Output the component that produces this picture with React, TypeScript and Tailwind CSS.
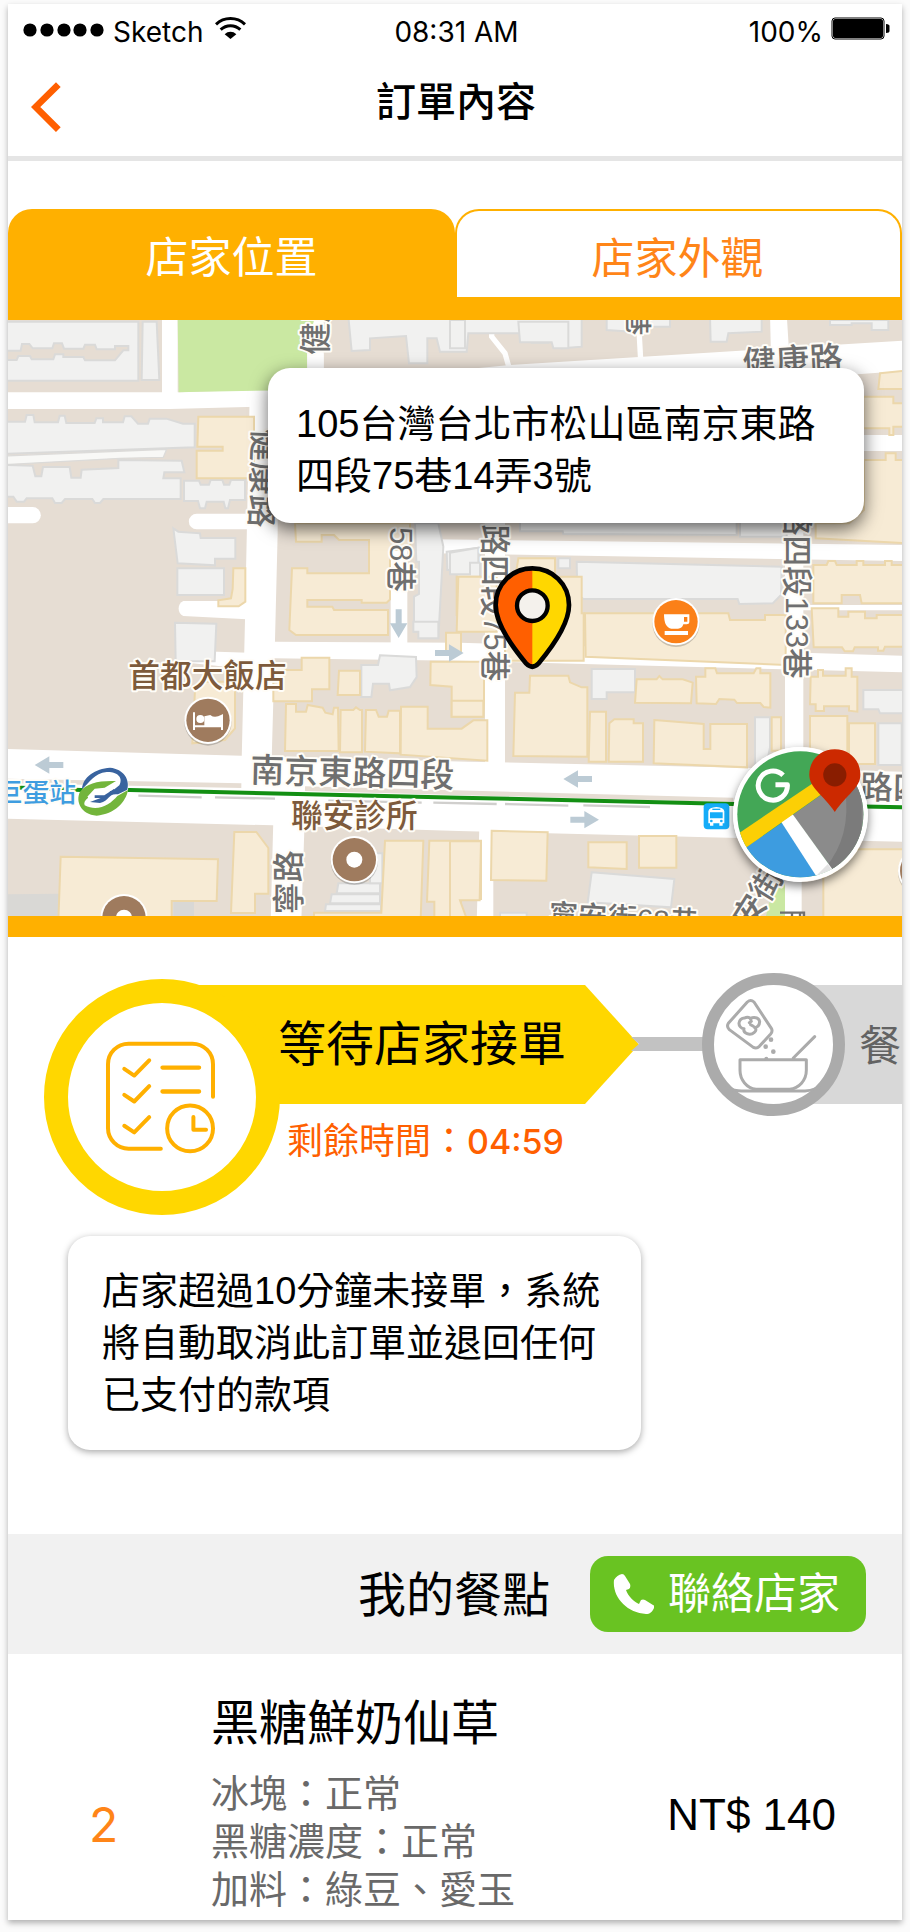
import React from "react";

const CJK = "font-['Liberation_Sans','Noto_Sans_CJK_TC',sans-serif]";

function StatusBar() {
  return (
    <div className="grid grid-cols-[1fr_auto_1fr] items-center pl-[15px] pr-3 pt-2 font-['Inter',sans-serif] text-[28px] leading-10">
      <div className="flex items-center gap-2">
        <svg className="mb-1 h-[14px] w-[82px]" viewBox="0 0 82 14" aria-hidden="true">
          <circle cx="7" cy="7" r="6.600" />
          <circle cx="24" cy="7" r="6.600" />
          <circle cx="41" cy="7" r="6.600" />
          <circle cx="57" cy="7" r="6.600" />
          <circle cx="74" cy="7" r="6.600" />
        </svg>
        <span>Sketch</span>
        <svg className="mb-2 ml-1 h-[22px] w-[31px]" viewBox="0 0 93 66" fill="none" stroke="#000" strokeWidth="9" aria-hidden="true">
          <path d="M3 22C27-1 66-1 90 22" />
          <path d="M17 38c17-16 42-16 59 0" />
          <path d="M29 52c10-10 25-10 35 0L46.500 66z" fill="#000" stroke="none" />
        </svg>
      </div>
      <span className="text-center">08:31 AM</span>
      <div className="flex items-center justify-end gap-2">
        <span>100%</span>
        <svg className="mb-2 h-[23px] w-[59px]" viewBox="0 0 59 23" aria-hidden="true">
          <rect x="1" y="1" width="52" height="21" rx="3" fill="none" stroke="#000" strokeWidth="1" />
          <rect x="2" y="2" width="50" height="19" rx="2" />
          <path d="M55 7c2.500 0 3.500 1 3.500 2v5c0 1-1 2-3.500 2z" />
        </svg>
      </div>
    </div>
  );
}

type Shape = [number, number, string];

const greyBlocks: Shape[] = [
  [0, 930, "M10 35H415V212H10V150H50l5-12H90l5 10h65l5-15h25v8h60l5 10H345l25-30h15V108H345v10H290l-5-14H255l-5 12H192l-6-16H162l-5 15H98L88 102H66l-4 20H10z"],
  [0, 930, "M428 35h42l8 175H425z"],
  [0, 930, "M10 335H75l5-20h20l4 22h70l5-20h15l5 22h85l5-14h20v12h60l5-18h20l20 22h30l5-15h50l50 15h35V412L10 432z"],
  [0, 930, "M10 465l88 2 8 32h18l5-28h80l5 32h28l3-24 110-5V450l190 2 8 35h-60l-3 18h52v62H310l-10 12H285l-8-12H195l-10 12H165l-8-14H80L72 575H50l-10-15H10z"],
  [0, 930, "M552 512h45l5 12h25l5-14h35l5 14h16l5-14h42v60H690l-6 25h-8l-5-20H620l-5 20H600l-6-22H552z"],
  [0, 930, "M520 655l15 10 65 5 2 14H706v62H645v20l-112-6z"],
  [0, 930, "M532 775H672v80H532z"],
  [0, 930, "M525 938l124 3-5 113H527z"],
  [0, 930, "M1045 20h700v90l-60 5V70l-40 3v25h-50V70H1405l-5 55H1320l-10-40h-28v75h-55L1218 78 1110 85v35l-55 3z"],
  [0, 930, "M1245 640h70l15 70-15 275H1258V965h-16V860l15-8V755h-8z"],
  [0, 930, "M1340 725l100-12v95h-70V780h-28z"],
  [1350, 930, "M205 35H355v80H310l-5-18H210z"],
  [1350, 930, "M470 20H660v30H545v15l-75-5z"],
  [1350, 930, "M780 20H935v45l-100 5-5 25H782z"],
  [1350, 930, "M1140 30h175v30h-50V40h-60V45h-65z"],
  [1350, 930, "M0 30h45v85H0z"],
  [1350, 930, "M380 755l615 15-2 85-25 25-100 2-5-15H400l-18-15z"],
  [1350, 930, "M325 745h35v30h-35z"],
  [1350, 930, "M0 728l85-15v45H60v35H0z"],
  [1350, 930, "M210 630H860v45L340 672l-2-8H210z"],
  [1350, 930, "M870 630h140v50H870z"],
  [0, 1890, "M1140 76l108 5 2 60-20 30-60 10-3-20h-48l-5 40h-30V105h50z"],
  [0, 1890, "M1240-25h75v50h-60V5h-15z"],
  [0, 1890, "M1015 760h125v30H1010zM995 793h145v27H990zM978 823h165v20H975z"],
  [0, 1890, "M1110 670h37v90h-37z"],
  [1350, 1890, "M425 117H555v70H470v20H425z"],
  [1350, 1890, "M425 727l248 20-10 85-250-15z"],
  [1350, 1890, "M915 262h45v90l-10 50H915z"],
  [1350, 1890, "M1240 180h130v70h-80l-5-12h-45zM1285 280h70v125h-70z"],
  [1350, 1890, "M150 848h80v20h-80z"],
];

const tanBlocks: Shape[] = [
  [0, 930, "M595 320H762V505H590V422H668V410H592z"],
  [0, 930, "M700 775h36v100l-20 14H655v-18l38-6 5-28z"],
  [0, 930, "M885 640h345v80h-60v148l-10 10h-75v-8H922v20h75l5 10h162v75H888l-20-15 8-185h46v15H1107V690h-90l-15-15H965v20H888z"],
  [0, 930, "M1370 800h70v115h-70z"],
  [0, 930, "M1338 968h45v60h-45z"],
  [1350, 930, "M205 745H315v55h80v110h6v142H165V1000z"],
  [1350, 930, "M25 800H140V965H20z"],
  [1350, 930, "M405 910l430 0 5 20h105v-15h62v150l-600-25z"],
  [1350, 930, "M1290 190l75-8v55h-80z"],
  [1350, 930, "M1240 260h90v20h40V350h-40v25h-12V355h-78z"],
  [1350, 930, "M1242 450h65V430h30v20h40V700l-280-15V640h100l45-40z"],
  [1350, 930, "M1090 765h40l5-12h20l5 12h60v-12h20v12h65v-12h20v12h50V880l-140 0-5-25h-55v25h-85z"],
  [1350, 930, "M1085 895h80v25h30v-15h50v20h35v-10h90v95h-65l-5 12h-16v-10h-70l-5 12h-25l-8-12-85 0z"],
  [0, 1890, "M585 180l15-25h105v140l-30 35-98 10z"],
  [0, 1890, "M905 83h83v95h-52v36H820V120h85z"],
  [0, 1890, "M1017 122h63v73h-67z"],
  [0, 1890, "M858 222h30v23h30l5-20 45 8 8 15 22 5 4-20h12l2 130H855z"],
  [0, 1890, "M1022 240h38l8-8 12 8h6V367h-66z"],
  [0, 1890, "M1098 240h30l8 20h25l5-18h34V370l-105-5z"],
  [0, 1890, "M1203 230h80v66h102l35-25h42V392l-260-18z"],
  [0, 1890, "M1292 95h160V210l-2 50h-95v-90l-64-5z"],
  [0, 1890, "M1355 212h95v48h-95z"],
  [0, 1890, "M182 680l472 8-4 125H515v60H175z"],
  [0, 1890, "M703 606h66l36 48v137h-40v58h-72z"],
  [0, 1890, "M1155 632h115l-8 236H942v-20h202z"],
  [0, 1890, "M1288 632h155v175h-60v61h-80v-53h-22z"],
  [1350, 1890, "M240 137h115l5 20 35 15h17V380L190 378l5-190h43z"],
  [1350, 1890, "M420 245h48v150h-52z"],
  [1350, 1890, "M478 280l15-12h58v12h28v115h-103z"],
  [1350, 1890, "M560 148h60l8-10 10 10h60l30 10-5 62-168-2z"],
  [1350, 1890, "M738 140h28v-25h30l5 15h110l8-15h12v15h30v103l-20-2-10-12h-70l-8-10-45-2-10 15-58-2z"],
  [1350, 1890, "M613 270l148 12v75h20v-75h110v130l-280-12z"],
  [1350, 1890, "M965 262h28v100h-28z"],
  [1350, 1890, "M1082 140h22v-20h15v17h68v-22h18v25h17v105l-25-3v-13h-75v14h-25v-20h-17z"],
  [1350, 1890, "M1080 258h112v145h-112zM1197 280h78v122h-78z"],
  [1350, 1890, "M125 602l168 5-4 145-166-2z"],
  [1350, 1890, "M415 637h115v80l-115-5zM567 618h112v95H567z"],
  [1350, 1890, "M1120 658h250v210h-250z"],
  [1350, 1890, "M0 634h93l-4 177H30l20 55H0z"],
];

const roads = [
  "M486 940h47v250h-47z",
  "M24 1177H535l215-7 780-75 1176-73v91l-1176 87-1020 27H24z",
  "M750 1140h83v460l-8 320-10 360h-90l10-420z",
  "M922 940h49v260h-49z",
  "M1172 1200h50v740h-50z",
  "M822 1925l558 3 1326 39v50l-1326-35-558-7z",
  "M1300 1618l1406 17v48L1300 1660z",
  "M1455 1560h60v750h-60z",
  "M2355 1500h55v870h-55z",
  "M2310 940h50l8 130h-55z",
  "M2590 1305h120v48h-120z",
  "M24 2247l700 20 680 18 560 12 742 18v210l-520-12-810-20-558-17-794-20z",
  "M820 2460h94l-10 300h-92z",
  "M1438 2480h42v290h-50z",
  "M2355 2600h50v160h-50z",
  "M24 1521H98a24 24 0 0 1 0 49H24z",
  "M750 1541H590a23 23 0 0 0 0 47H750z",
  "M745 1803H550a25 25 0 0 0 0 45l190 10z",
  "M745 1958l-185-6a20 20 0 0 0-10 35l190 20z",
  "M2400 1815h310v16h-310z",
];

function Halo({ children, x, y, size, rotate = 0, fill = "#6f6f6f", anchor = "start" }: {
  children: React.ReactNode; x: number; y: number; size: number; rotate?: number; fill?: string; anchor?: "start" | "middle" | "end";
}) {
  return (
    <text
      transform={`translate(${x} ${y}) rotate(${rotate})`}
      fontSize={size}
      fontWeight={500}
      fill={fill}
      textAnchor={anchor}
      stroke="#fffdf8"
      strokeWidth="12"
      strokeLinejoin="round"
      paintOrder="stroke"
    >
      {children}
    </text>
  );
}

function Poi({ x, y, color, children }: { x: number; y: number; color: string; children: React.ReactNode }) {
  return (
    <g transform={`translate(${x} ${y})`}>
      <circle cy="5" r="71" fill="#00000030" />
      <circle r="71" fill="#fff" />
      <circle r="65" fill={color} />
      {children}
    </g>
  );
}

const ARROW = "M0 0L44-26V-9H86V9H44V26z";

function StreetMap() {
  return (
    <svg
      className="block h-auto w-full font-['Liberation_Sans','Noto_Sans_CJK_TC',sans-serif]"
      viewBox="24 960 2682 1788"
      role="img"
      aria-label="店家位置"
    >
      <rect x="0" y="900" width="2800" height="1900" fill="#e6ddd3" />
      <path d="M24 2683l160-2v67H24zM520 2690h62v60h-62z" fill="#d9d8d5" />
      <g fill="#fff">
        {roads.map((d) => <path key={d} d={d} />)}
      </g>
      <path d="M533 950H945l-24 90v130l-320 5-65 2z" fill="#cae8a2" />
      <path d="M922 1060h49v120h-49z" fill="#fff" />
      <path d="M10 1368L500 1348l-10 24-130 3-330 18H10z" fill="#f8f8f6" stroke="#dcdbd9" strokeWidth="4" />
      <path d="M1475 950v60l40 50 20 70M1917 990l5 90" fill="none" stroke="#fff" strokeWidth="16" />
      <g fill="#f1f1f0" stroke="#dadad9" strokeWidth="6">
        {greyBlocks.map(([x, y, d]) => <path key={d} d={d} transform={`translate(${x} ${y})`} />)}
      </g>
      <g fill="#f7ebd5" stroke="#ecd7ab" strokeWidth="6">
        {tanBlocks.map(([x, y, d]) => <path key={d} d={d} transform={`translate(${x} ${y})`} />)}
      </g>
      <path d="M2295 2760l20-80 40-60v140z" fill="#cae8a2" />

      <path d="M24 2343l700 14M915 2366l1285 34" stroke="#e6ddd3" strokeWidth="14" />
      <path d="M415 2387l190 5M645 2392l180 4M985 2402l280 6M1300 2408l190 4M1515 2412l190 5M1750 2416l200 5" stroke="#d0cfcd" strokeWidth="7" />
      <path d="M24 2362l220 8h145l991 23 820 19 506 10" fill="none" stroke="#138f13" strokeWidth="12" />

      <g fill="#bccbd5">
        <path d={ARROW} transform="translate(104 2295)" />
        <path d={ARROW} transform="translate(1690 2337)" />
        <path d={ARROW} transform="translate(1797 2459) rotate(180)" />
        <path d={ARROW} transform="translate(1391 1959) rotate(180)" />
        <path d={ARROW} transform="translate(1196 1914) rotate(-90)" />
      </g>

      <Halo x={980} y={1064} size={96} rotate={-90}>健康</Halo>
      <Halo x={760} y={1285} size={99} rotate={92}>健康路</Halo>
      <Halo x={1171} y={1776} size={92} rotate={90} anchor="end">58巷</Halo>
      <Halo x={1452} y={2044} size={92} rotate={90} anchor="end">路四段75巷</Halo>
      <Halo x={2358} y={2036} size={92} rotate={90} anchor="end">路四段133巷</Halo>
      <Halo x={1884} y={1006} size={82} rotate={90} anchor="end">巷</Halo>
      <Halo x={2230} y={1126} size={100} rotate={-3}>健康路</Halo>
      <Halo x={750} y={2346} size={102} rotate={1.5}>南京東路四段</Halo>
      <Halo x={2580} y={2396} size={98} rotate={1}>路四</Halo>
      <Halo x={900} y={2743} size={96} rotate={-90}>寧路</Halo>
      <Halo x={1645} y={2775} size={88} rotate={3}>寧安街68巷</Halo>
      <Halo x={2252} y={2792} size={96} rotate={-58}>安街</Halo>
      <path d="M2340 2738h72v10M2376 2738v10M2400 2738v10" fill="none" stroke="#6f6f6f" strokeWidth="7" />
      <Halo x={385} y={2062} size={95} fill="#7d5a3b">首都大飯店</Halo>
      <Halo x={873} y={2480} size={95} fill="#7d5a3b">聯安診所</Halo>
      <Halo x={228} y={2407} size={80} fill="#3f9de0" anchor="end">巨蛋站</Halo>

      <Poi x={624} y={2161} color="#9f7b5e">
        <path d="M-42-24v53M-42 18H42M42-14v43M-8 14V-10L6-13Q20-2 42-14V14z" fill="#fff" stroke="#fff" strokeWidth="6" />
        <circle cx="-23" cy="-4" r="12" fill="#fff" />
      </Poi>
      <Poi x={1063} y={2579} color="#9f7b5e"><circle r="24" fill="#fff" /></Poi>
      <Poi x={372} y={2753} color="#9f7b5e"><circle r="24" fill="#fff" /></Poi>
      <Poi x={2765} y={2612} color="#9f7b5e"><circle r="24" fill="#fff" /></Poi>
      <Poi x={2028} y={1865} color="#fb8018">
        <path d="M-36-22H40V2q0 6-8 6H22q-4 13-16 13h-20q-22-3-22-43zM24-14V0H34V-14z" fill="#fff" fillRule="evenodd" />
        <path d="M-34 28H36V40H-34z" fill="#fff" />
      </Poi>

      <g transform="translate(0 1890)">
        <path d="M248 478q5-50 62-64 60-6 74 34 4 40-8 55-18 45-88 53-50-6-52-55z" fill="#fff" />
        <path d="M246 478c2-38 40-62 84-65 42 4 60 36 52 66l-28 14c-30-4-24 18-54 26l-30-3 48-18 40-32c14-26-10-42-38-40-38 4-50 30-74 52z" fill="#39639f" />
        <path d="M384 480c-6 36-40 72-94 77-48-4-64-44-50-72 20-26 58-34 108-32l-34 20-30 3-22 24c10 4-14 8-8 26 40 22 78-4 98-28z" fill="#73b53b" />
        <path d="M330 487l36-6M284 500h30l30-20" fill="none" stroke="#39639f" strokeWidth="8" />
        <path d="M278 492h30l30-22" fill="none" stroke="#fff" strokeWidth="4" />
      </g>

      <g transform="translate(2111 2410)">
        <rect width="77" height="78" rx="12" fill="#15acf8" />
        <path d="M14 24q2-12 24-13 22 1 24 13v36h-5v7H47v-7H29v7H19v-7h-5zM19 27v18h38V27z" fill="#fff" fillRule="evenodd" />
        <path d="M26 18h24" stroke="#15acf8" strokeWidth="4" />
        <circle cx="23" cy="53" r="4" fill="#15acf8" />
        <circle cx="53" cy="53" r="4" fill="#15acf8" />
      </g>

      <g transform="translate(1350 930)">
        <path d="M247 775c-60 0-110 47-110 110 0 55 45 120 92 176q18 18 36 0c47-56 92-121 92-176 0-63-50-110-110-110z" fill="#ffd700" />
        <path d="M247 775c-60 0-110 47-110 110 0 55 45 120 92 176q8 9 18 9z" fill="#ff5f00" />
        <path d="M247 775c-60 0-110 47-110 110 0 55 45 120 92 176q18 18 36 0c47-56 92-121 92-176 0-63-50-110-110-110z" fill="none" stroke="#000" strokeWidth="14" />
        <circle cx="247" cy="887" r="46" fill="#f4f1ec" stroke="#000" strokeWidth="13" />
      </g>
    </svg>
  );
}

function MapsIcon() {
  return (
    <svg className="size-full" viewBox="850 350 407 407" aria-hidden="true">
      <defs>
        <clipPath id="maps-disc"><circle cx="1053" cy="553" r="190" /></clipPath>
      </defs>
      <circle cx="1053" cy="553" r="203" fill="#fff" />
      <g clipPath="url(#maps-disc)">
        <rect x="850" y="350" width="407" height="407" fill="#43a756" />
        <path d="M1030 555L1250 400V760H1180z" fill="#8b8b8b" />
        <path d="M1188 480q20 140-60 235l110 20V440z" fill="#7b7b7b" />
        <path d="M890 652L1010 570 1110 740 1000 780 870 750z" fill="#3d9ce0" />
        <path d="M995 575l35-22 130 180-45 28z" fill="#fff" />
        <path d="M1104 735l32-32 20 30-40 20z" fill="#e3e3e3" />
        <path d="M860 615L1120 440v50L880 660z" fill="#fccf05" />
      </g>
      <path d="M1001 435A44 44 0 1 0 1014 464H978" fill="none" stroke="#fff" strokeWidth="15" strokeLinejoin="round" />
      <path d="M1157 357c-44 0-77 33-77 76 0 42 42 60 77 113 35-53 77-71 77-113 0-43-33-76-77-76z" fill="#cc2900" />
      <circle cx="1157" cy="434" r="35" fill="#891d00" />
    </svg>
  );
}

function OrderIcon() {
  return (
    <svg className="mr-1 h-[113px] w-[111px]" viewBox="226 280 332 340" fill="none" stroke="#ffb000" strokeWidth="12" strokeLinecap="round" strokeLinejoin="round" aria-hidden="true">
      <path d="M550 448V350a62 62 0 0 0-62-62H296a62 62 0 0 0-62 62V542a62 62 0 0 0 62 62h97" />
      <path d="M283 364l30 20 45-46M283 442l30 20 45-46M283 535l30 20 45-46" />
      <path d="M398 360H508M398 432H508" strokeWidth="13" />
      <circle cx="481" cy="543" r="69" />
      <path d="M491 509v38h38" />
    </svg>
  );
}

function CookingIcon() {
  return (
    <svg className="size-full" viewBox="762 104 357 357" fill="none" stroke="#ababab" strokeWidth="9" strokeLinecap="round" strokeLinejoin="round" aria-hidden="true">
      <path d="M862 155q10-9 20 0l52 79q5 9-2 17l-34 37q-8 8-18 3l-72-53q-9-9-3-19z" />
      <path d="M852 235a16 16 0 1 1 2-32q8-5 16 0l2 4 4-5q20-3 23 12-1 16-15 18 8 6-1 14-10 9-22 4-12-5-9-15zM868 217l6-4M880 228l-8-5" />
      <path d="M840 328h199v32c0 30-22 54-50 57H888c-28-4-48-28-48-57zM1000 323l64-64" />
      <path d="M800 412q25 10 45 10h190q20-1 42-10M886 418h106" />
      <g fill="#ababab" stroke="none">
        <circle cx="933" cy="268" r="7" />
        <circle cx="917" cy="289" r="7" />
        <circle cx="940" cy="304" r="7" />
        <circle cx="919" cy="325" r="6" />
      </g>
    </svg>
  );
}

function Progress() {
  return (
    <section className="flex items-start overflow-hidden pl-9 pt-9">
      <div className="relative z-10 mt-[6px] flex size-[236px] shrink-0 items-center justify-center rounded-full border-[24px] border-[#ffd700] bg-white">
        <OrderIcon />
      </div>
      <div className="-ml-[118px] mt-3 w-[477px] shrink-0">
        <h2 className="h-[119px] bg-[#ffd700] pl-[116px] text-[48px] leading-[119px] [clip-path:polygon(0_0,calc(100%-54px)_0,100%_50%,calc(100%-54px)_100%,0_100%)]">
          等待店家接單
        </h2>
        <p className="pl-[125px] pt-3 text-[36px] leading-[52px] text-[#ff5f00]">
          剩餘時間：<span className="font-['Inter',sans-serif] text-[34px] font-medium">04:59</span>
        </p>
      </div>
      <div className="-ml-2 mt-16 h-[14px] w-[76px] shrink-0 bg-[#c2c2c2] [clip-path:polygon(0_0,100%_0,100%_100%,0_100%,8px_50%)]" />
      <div className="relative z-10 -ml-[5px] size-[143px] shrink-0 rounded-full border-[12px] border-[#ababab] bg-white">
        <CookingIcon />
      </div>
      <div className="-ml-[72px] mt-3 h-[119px] min-w-0 flex-1 overflow-hidden bg-[#d8d8d8] pl-[86px] text-[42px] leading-[123px] text-[#636363]">
        餐
      </div>
    </section>
  );
}

export default function App() {
  return (
    <div className="bg-[#fbfbfb] px-2 pb-3 pt-1">
      <main lang="zh-Hant" className={`flex flex-col bg-white text-black shadow-[0_3px_6px_rgba(0,0,0,0.3)] ${CJK}`}>
        <header className="border-b-[5px] border-[#e5e5e5] pb-5">
          <StatusBar />
          <div className="grid grid-cols-[64px_1fr_64px] items-center pt-[17px]">
            <button type="button" aria-label="返回" className="flex h-[67px] cursor-pointer items-center pl-[23px] pt-2">
              <svg className="h-[50px] w-[30px]" viewBox="92 243 90 150" aria-hidden="true">
                <path d="M174 251L106 318l68 68" fill="none" stroke="#ff5f00" strokeWidth="20" />
              </svg>
            </button>
            <h1 className="pl-[2px] text-center text-[40px] font-medium leading-[67px]">訂單內容</h1>
          </div>
        </header>

        <div role="tablist" className="mt-12 grid grid-cols-2 border-b-[23px] border-[#ffb000]">
          <button type="button" role="tab" aria-selected="true" className="h-[88px] cursor-pointer rounded-t-[24px] bg-[#ffb000] pt-[10px] text-[43px] leading-[78px] text-white">店家位置</button>
          <button type="button" role="tab" aria-selected="false" className="h-[88px] cursor-pointer rounded-t-[24px] border-2 border-b-0 border-[#ffb000] pr-[2px] pt-[10px] text-[43px] leading-[76px] text-[#ff8518]">店家外觀</button>
        </div>

        <section className="relative overflow-hidden border-b-[21px] border-[#ffb000]">
          <StreetMap />
          <p className="absolute right-[38px] top-12 w-[596px] rounded-[22px] bg-white pb-[21px] pl-7 pr-8 pt-[30px] text-[38px] leading-[52px] shadow-[0_6px_18px_rgba(0,0,0,0.6)]">
            105台灣台北市松山區南京東路四段75巷14弄3號
          </p>
          <a href="#maps" aria-label="Google 地圖" className="absolute bottom-[34px] right-[34px] size-[135px] rounded-full shadow-[0_4px_10px_rgba(0,0,0,0.5)]">
            <MapsIcon />
          </a>
        </section>

        <Progress />

        <p className="ml-[60px] mt-[21px] w-[573px] rounded-[22px] bg-white py-[29px] pl-[34px] pr-8 text-[38px] leading-[52px] shadow-[0_2px_7px_rgba(0,0,0,0.35)]">
          店家超過10分鐘未接單，系統將自動取消此訂單並退回任何已支付的款項
        </p>

        <div className="mt-[84px] flex h-[120px] items-center justify-end gap-10 bg-[#f1f1f1] pr-9">
          <h2 className="pt-1 text-[48px] leading-[60px]">我的餐點</h2>
          <a href="#call" className="flex h-[76px] items-center gap-[14px] rounded-[18px] bg-[#69c322] pl-[23px] pr-[26px] text-[43px] leading-[76px] text-white">
            <svg className="h-[40px] w-[41px]" viewBox="0 0 41 40" fill="#fff" aria-hidden="true">
              <path d="M1 6Q4 1 9 0q2 0 3 2l5 8q1 3-1 5l-3 1c2 6 8 12 13 14l2-4q2-1 4 0l8 5q2 1 1 3c-2 4-4 6-8 6C14 39-1 23 1 6z" />
            </svg>
            聯絡店家
          </a>
        </div>

        <article className="grid grid-cols-[203px_1fr_auto] pb-[6px] pr-[66px] pt-10">
          <span className="pl-[81px] pt-[104px] font-['Inter',sans-serif] text-[48px] leading-[54px] text-[#ff8518]">2</span>
          <div>
            <h3 className="text-[48px] leading-[60px]">黑糖鮮奶仙草</h3>
            <ul className="pt-4 text-[38px] leading-[48px] text-[#696969]">
              <li>冰塊：正常</li>
              <li>黑糖濃度：正常</li>
              <li>加料：綠豆、愛玉</li>
            </ul>
          </div>
          <span className="pt-24 text-[44px] leading-[50px]">NT$ 140</span>
        </article>
      </main>
    </div>
  );
}
